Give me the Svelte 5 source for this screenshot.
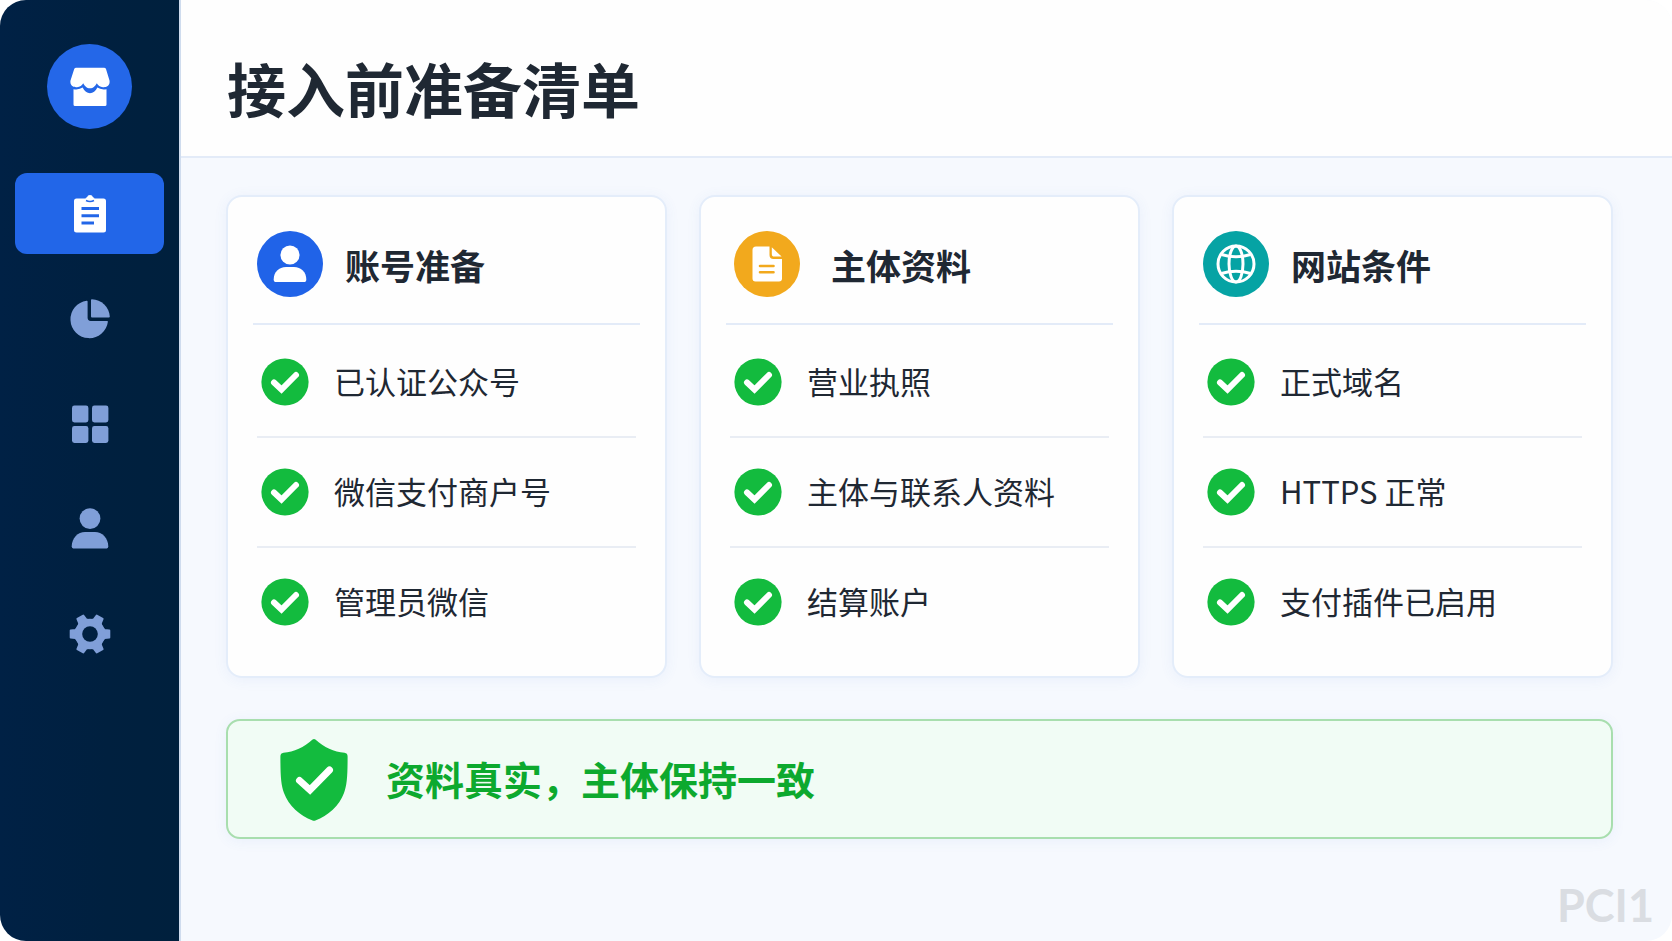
<script lang="ts">
  const cards = [
    {
      title: '账号准备',
      icon: 'user',
      items: ['已认证公众号', '微信支付商户号', '管理员微信']
    },
    {
      title: '主体资料',
      icon: 'file',
      items: ['营业执照', '主体与联系人资料', '结算账户']
    },
    {
      title: '网站条件',
      icon: 'globe',
      items: ['正式域名', 'HTTPS 正常', '支付插件已启用']
    }
  ];

  const nav = [
    { id: 'list', label: '清单' },
    { id: 'chart', label: '统计' },
    { id: 'apps', label: '应用' },
    { id: 'user', label: '账号' },
    { id: 'settings', label: '设置' }
  ];

  let active = 'list';
</script>

<div class="shell">
  <aside class="sidebar">
    <a class="logo" href="#home" aria-label="商户首页">
      <svg viewBox="0 0 40 40" width="40" height="40" fill="currentColor">
        <path d="M6.2 .7H34Q35.5 .7 36 2.1L39.5 13.4C40.4 19 36 20.6 33 20.2C30 19.8 28 18.3 26.8 16.2C25.3 18.8 23.3 21.3 20 21.3C16.7 21.3 14.7 18.8 13.2 16.2C12 18.3 10 19.8 7 20.2C4 20.6-.4 19 .5 13.4L4.2 2.1Q4.7 .7 6.2 .7Z" />
        <path d="M3.5 22.2Q9.5 23 12.6 20.6Q15.5 26.3 20 26.3Q24.5 26.3 27.4 20.6Q30.5 23 36.5 22.2V37.5Q36.5 39 35 39H5Q3.5 39 3.5 37.5Z" />
      </svg>
    </a>

    <nav>
      {#each nav as item}
        <button
          class="nav-btn"
          class:active={active === item.id}
          aria-label={item.label}
          on:click={() => (active = item.id)}
        >
          <svg viewBox="0 0 40 40" width="40" height="40" fill="currentColor">
            {#if item.id === 'list'}
              <path
                fill-rule="evenodd"
                d="M6.5 4.5H33.5A2.5 2.5 0 0 1 36 7V36A2.5 2.5 0 0 1 33.5 38.5H6.5A2.5 2.5 0 0 1 4 36V7A2.5 2.5 0 0 1 6.5 4.5ZM11.5 13V16H29V13ZM11.5 20.2V23.2H29V20.2ZM11.5 27.4V30.4H24V27.4Z"
              />
              <path d="M15.5 7V5Q15.5 3.5 17 3.2Q17.6 1 20 1Q22.4 1 23 3.2Q24.5 3.5 24.5 5V7Z" />
              <path class="clip-line" d="M16 6.5Q20 8.5 24 6.5" />
            {:else if item.id === 'chart'}
              <path d="M17.6 2.5V18.8Q17.6 21.9 20.7 21.9H37.2Q38 21.9 37.9 22.8A18.8 18.8 0 1 1 16.7 1.7Q17.6 1.6 17.6 2.5Z" />
              <path d="M21.9 .2A18.4 18.4 0 0 1 39.8 17.6Q39.8 18.6 38.8 18.6H22Q21 18.6 21 17.6V1.1Q21 .2 21.9 .2Z" />
            {:else if item.id === 'apps'}
              <rect x="2" y="1.5" width="16.4" height="17" rx="2.4" />
              <rect x="22" y="1.5" width="16.4" height="17" rx="2.4" />
              <rect x="2" y="22" width="16.4" height="17" rx="2.4" />
              <rect x="22" y="22" width="16.4" height="17" rx="2.4" />
            {:else if item.id === 'user'}
              <circle cx="20" cy="9.6" r="10.4" />
              <path d="M15 23H25C32 23 38.3 29 38.3 37.6Q38.3 39.4 36.8 39.4H3.2Q1.7 39.4 1.7 37.6C1.7 29 8 23 15 23Z" />
            {:else}
              <mask id="gear-hole">
                <rect x="-2" y="-2" width="44" height="44" fill="#fff" />
                <circle cx="20" cy="20" r="7.8" fill="#000" />
              </mask>
              <g class="gear" mask="url(#gear-hole)">
                <circle cx="20" cy="20" r="15.2" />
                {#each [0, 60, 120, 180, 240, 300] as angle}
                  <path d="M31 12.5L34.6 16L39.3 16.6V23.4L34.6 24L31 27.5Z" transform="rotate({angle} 20 20)" />
                {/each}
              </g>
            {/if}
          </svg>
        </button>
      {/each}
    </nav>
  </aside>

  <div class="page">
    <header class="page-header">
      <h1>接入前准备清单</h1>
    </header>

    <main>
      <div class="cards">
        {#each cards as card}
          <section class="card {card.icon}">
            <div class="card-header">
              <span class="badge">
                <svg viewBox="0 0 66 66" width="66" height="66" fill="currentColor">
                  {#if card.icon === 'user'}
                    <circle cx="33" cy="24" r="9.6" />
                    <path d="M29 36H37C44 36 49.3 41 49.3 48.4Q49.3 51 46.8 51H19.2Q16.7 51 16.7 48.4C16.7 41 22 36 29 36Z" />
                  {:else if card.icon === 'file'}
                    <path d="M22 15.5H35.5V24Q35.5 28 39.5 28H48V47.5Q48 50.5 45 50.5H21.5Q18.5 50.5 18.5 47.5V19Q18.5 15.5 22 15.5Z" />
                    <path d="M37.8 16.2L47.6 25.6H40.4Q37.8 25.6 37.8 23Z" />
                    <path class="rule" d="M26 35H39.5M26 41.3H39.5" />
                  {:else}
                    <g class="globe-lines">
                      <circle cx="33" cy="33" r="18" />
                      <ellipse cx="33" cy="33" rx="7" ry="18" />
                      <path d="M18.5 23.5Q33 28 47.5 23.5M18.5 42.5Q33 38 47.5 42.5" />
                    </g>
                  {/if}
                </svg>
              </span>
              <h2>{card.title}</h2>
            </div>

            <ul>
              {#each card.items as text}
                <li>
                  <svg class="check" viewBox="0 0 48 48" width="48" height="48">
                    <circle cx="24" cy="24" r="23.6" />
                    <path d="M13 24.5L20.5 31.5L35 17" />
                  </svg>
                  <span>{text}</span>
                </li>
              {/each}
            </ul>
          </section>
        {/each}
      </div>

      <div class="notice">
        <svg viewBox="0 0 68 82" width="68" height="82">
          <path
            class="plate"
            d="M32.6 .6Q34 -.4 35.4 .6C44 8.5 54 13 64.5 13.8Q67.6 14.2 67.6 17.4C67.6 37 67 46 64 54C59.5 66.5 48 77 35.4 81.4Q34 82 32.6 81.4C20 77 8.5 66.5 4 54C1 46 .4 37 .4 17.4Q.4 14.2 3.5 13.8C14 13 24 8.5 32.6 .6Z"
          />
          <path class="tick" d="M19.5 41.5L30 51L49.5 31" />
        </svg>
        <p>资料真实，主体保持一致</p>
      </div>
    </main>

    <div class="watermark">PCI1</div>
  </div>
</div>

<style>
  :global(body) {
    margin: 0;
    background: #fff;
  }

  .shell {
    display: flex;
    min-height: 100vh;
    border-radius: 26px;
    overflow: hidden;
    background: #f6f9fe;
    color: #1f2833;
    font-family: 'Noto Sans CJK SC', 'Noto Sans', sans-serif;
  }

  .sidebar {
    box-sizing: border-box;
    flex: 0 0 181px;
    padding: 44px 15px 0;
    border-right: 2px solid #cfdcee;
    background: linear-gradient(90deg, #002145, #00203f 60%, #00203d);
  }

  .logo {
    display: flex;
    align-items: center;
    justify-content: center;
    width: 85px;
    height: 85px;
    margin: 0 auto 44px;
    border-radius: 50%;
    background: #2467e8;
    color: #fff;
  }

  nav {
    display: flex;
    flex-direction: column;
    gap: 24px;
  }

  .nav-btn {
    display: flex;
    align-items: center;
    justify-content: center;
    height: 81px;
    padding: 0;
    border: 0;
    border-radius: 12px;
    background: none;
    color: #809fd8;
    cursor: pointer;
  }

  .nav-btn svg {
    overflow: visible;
  }

  .nav-btn.active {
    background: #2266e8;
    color: #fff;
  }

  .clip-line {
    fill: none;
    stroke: #2266e8;
    stroke-width: 1.6;
  }

  .gear path {
    stroke: currentColor;
    stroke-width: 2;
    stroke-linejoin: round;
  }

  .page {
    position: relative;
    flex: 1;
    min-width: 0;
  }

  .page-header {
    padding: 46px 46px 26px;
    border-bottom: 2px solid #e3ebf8;
    background: #fefefe;
  }

  h1 {
    margin: 0;
    font-size: 59px;
    line-height: 84px;
    font-weight: 700;
  }

  main {
    padding: 37px 59px 64px 45px;
  }

  .cards {
    display: grid;
    grid-template-columns: repeat(3, 1fr);
    gap: 32px;
  }

  .card {
    padding-bottom: 18px;
    border: 2px solid #e4edfa;
    border-radius: 16px;
    background: #fefefe;
    box-shadow: 0 2px 14px rgba(70, 120, 210, 0.07);
  }

  .card-header {
    display: flex;
    align-items: center;
    gap: 22px;
    height: 118px;
    margin: 0 25px;
    padding: 8px 0 0 4px;
    border-bottom: 2px solid #e3ebf8;
  }

  .card.file .card-header {
    gap: 31px;
    padding-left: 8px;
  }

  .badge {
    display: flex;
    border-radius: 50%;
    background: #2063e8;
    color: #fff;
  }

  .file .badge {
    background: #f2a91d;
  }

  .globe .badge {
    background: #06a3a4;
  }

  .rule {
    fill: none;
    stroke: #f2a91d;
    stroke-width: 2.6;
    stroke-linecap: round;
  }

  .globe-lines {
    fill: none;
    stroke: currentColor;
    stroke-width: 3;
  }

  h2 {
    margin: 2px 0 0;
    font-size: 35px;
    line-height: 48px;
    font-weight: 700;
  }

  ul {
    margin: 0 29px;
    padding: 3px 0 0;
    list-style: none;
  }

  li {
    display: flex;
    box-sizing: border-box;
    align-items: center;
    gap: 25px;
    height: 110px;
    padding-left: 4px;
    border-bottom: 2px solid #e9edf4;
    font-size: 31px;
    line-height: 44px;
    white-space: nowrap;
  }

  li:last-child {
    border-bottom-color: transparent;
  }

  li span {
    padding-bottom: 3px;
  }

  .check circle,
  .plate {
    fill: #13bb3e;
  }

  .check path,
  .tick {
    fill: none;
    stroke: #fff;
    stroke-width: 6;
    stroke-linecap: round;
  }

  .tick {
    stroke-width: 7;
  }

  .notice {
    display: flex;
    align-items: center;
    gap: 38px;
    margin-top: 41px;
    padding: 18px 52px 16px;
    border: 2px solid #a8deae;
    border-radius: 14px;
    background: #f1fcf5;
    box-shadow: 0 2px 14px rgba(70, 120, 210, 0.07);
  }

  .notice p {
    margin: 0 0 4px;
    color: #0da92e;
    font-size: 39px;
    line-height: 56px;
    font-weight: 700;
  }

  .watermark {
    position: absolute;
    right: 18px;
    bottom: 8px;
    color: #dadde2;
    font-family: Lato, sans-serif;
    font-size: 45px;
    line-height: 56px;
    font-weight: 700;
  }
</style>
